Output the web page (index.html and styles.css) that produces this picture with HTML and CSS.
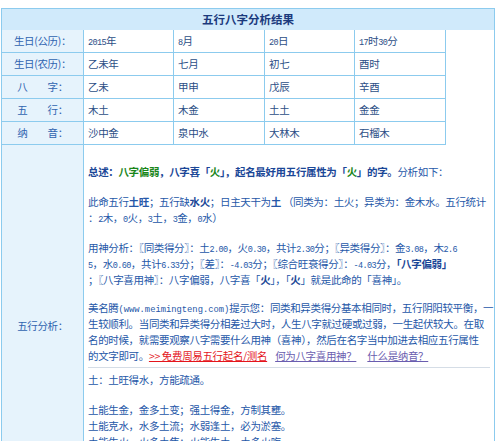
FILE: index.html
```html
<!DOCTYPE html>
<html lang="zh-CN">
<head>
<meta charset="utf-8">
<title>五行八字分析结果</title>
<link rel="stylesheet" href="styles.css">
</head>
<body>
<div class="box">
  <div class="title">五行八字分析结果</div>
  <div class="grid">
    <div class="lab">生日(公历)：</div>
    <div class="val"><span class="a">2015</span>年</div>
    <div class="val"><span class="a">8</span>月</div>
    <div class="val"><span class="a">20</span>日</div>
    <div class="val"><span class="a">17</span>时<span class="a">30</span>分</div>

    <div class="lab">生日(农历)：</div>
    <div class="val">乙未年</div>
    <div class="val">七月</div>
    <div class="val">初七</div>
    <div class="val">酉时</div>

    <div class="lab">八&#12288;&#12288;字：</div>
    <div class="val">乙未</div>
    <div class="val">甲申</div>
    <div class="val">戊辰</div>
    <div class="val">辛酉</div>

    <div class="lab">五&#12288;&#12288;行：</div>
    <div class="val">木土</div>
    <div class="val">木金</div>
    <div class="val">土土</div>
    <div class="val">金金</div>

    <div class="lab">纳&#12288;&#12288;音：</div>
    <div class="val">沙中金</div>
    <div class="val">泉中水</div>
    <div class="val">大林木</div>
    <div class="val">石榴木</div>
  </div>
  <div class="analysis">
    <div class="alab">五行分析：</div>
    <div class="acon">
      <p class="p1"><b class="db">总述：</b><b class="g">八字偏弱</b><b class="db">，八字喜「</b><b class="g">火</b><b class="db">」，起名最好用五行属性为「</b><b class="g">火</b><b class="db">」的字。</b>分析如下：</p>
      <p>此命五行<b>土旺</b>；五行缺<b class="db">水火</b>；日主天干为<b>土</b> （同类为：土火；异类为：金木水。五行统计<br>：<span class="a">2</span>木，<span class="a">0</span>火，<span class="a">3</span>土，<span class="a">3</span>金，<span class="a">0</span>水）</p>
      <p>用神分析：〖同类得分〗：土<span class="a">2.00</span>，火<span class="a">0.30</span>，共计<span class="a">2.30</span>分；〖异类得分〗：金<span class="a">3.08</span>，木<span class="a">2.6</span><br><span class="a">5</span>，水<span class="a">0.60</span>，共计<span class="a">6.33</span>分；〖差〗：<span class="a">-4.03</span>分；〖综合旺衰得分〗：<span class="a">-4.03</span>分，<b class="db">「八字偏弱」</b><br>；〖八字喜用神〗：八字偏弱，八字喜「<b class="db">火</b>」，「<b class="db">火</b>」就是此命的「喜神」。</p>
      <p class="p4">美名腾<span class="u">(www.meimingteng.com)</span>提示您：同类和异类得分基本相同时，五行阴阳较平衡，一<br>生较顺利。当同类和异类得分相差过大时，人生八字就过硬或过弱，一生起伏较大。在取<br>名的时候，就需要观察八字需要什么用神（喜神），然后在名字当中加进去相应五行属性<br>的文字即可。<a class="red" href="#">&gt;&gt; 免费周易五行起名/测名</a><a class="pur l1" href="#">何为八字喜用神？</a><a class="pur l2" href="#">什么是纳音？</a></p>
      <hr class="sep">
      <p class="p5">土：土旺得水，方能疏通。</p>
      <p>土能生金，金多土变；强土得金，方制其壅。<br>土能克水，水多土流；水弱逢土，必为淤塞。<br>土能生火，火多土焦；火能生土，土多火晦。<br>土能克木，木多土倾；土衰遇木，必遭倾陷。</p>
    </div>
  </div>
</div>
</body>
</html>
```

FILE: styles.css
```css
html, body {
  margin: 0;
  background: #ffffff;
}
body {
  padding: 8px 0 0 1px;
  font-family: "Noto Sans CJK SC", "Noto Sans", sans-serif;
  font-size: 10.5px;
  letter-spacing: -0.35px;
}
.box {
  width: 494px;
  box-sizing: border-box;
  border: 1px solid #8ccbee;
}
.title {
  height: 21px;
  line-height: 21px;
  background: #d0eafb;
  text-align: center;
  font-weight: bold;
  color: #1b3a7d;
  font-size: 11.5px;
  letter-spacing: 0;
}
.grid {
  display: grid;
  grid-template-columns: 82px 90px 91px 90px 91px;
  width: 444px;
}
.grid > div {
  box-sizing: border-box;
  height: 23px;
  line-height: 22px;
  border-right: 1px solid #8ccbee;
  border-bottom: 1px solid #8ccbee;
  white-space: nowrap;
}
.lab {
  background: #e6f3fc;
  color: #2f63b0;
  text-align: center;
}
.val {
  padding-left: 4px;
  color: #2c4e86;
}
.a {
  font-family: "Liberation Mono", monospace;
  font-size: 8.5px;
  letter-spacing: -0.6px;
  line-height: 1;
}
.u {
  font-family: "Liberation Mono", monospace;
  font-size: 8.8px;
  letter-spacing: 0;
  line-height: 1;
}
.analysis {
  display: flex;
}
.alab {
  flex: none;
  width: 82px;
  box-sizing: border-box;
  background: #e6f3fc;
  border-right: 1px solid #8ccbee;
  text-align: center;
  color: #2f63b0;
  line-height: 16px;
  padding-top: 173px;
}
.acon {
  flex: 1;
  min-width: 0;
  padding: 5px 4px 20px;
  color: #2557a8;
  line-height: 16px;
  white-space: nowrap;
}
.acon p {
  margin: 14px 0 0;
}
.acon p.p4 {
  margin-top: 12px;
}
.acon p.p5 {
  margin-top: 4px;
}
.sep {
  margin: 3px 0 0;
  border: 0;
  height: 1px;
  background: #d5dde6;
}
b {
  font-weight: bold;
}
.db {
  color: #1b4797;
}
.g {
  color: #1a861a;
}
.red {
  color: #e4151c;
  text-decoration: underline;
}
.pur {
  color: #6a5daf;
  text-decoration: underline;
}
.l1 {
  margin-left: 8px;
}
.l2 {
  margin-left: 11px;
}
```
